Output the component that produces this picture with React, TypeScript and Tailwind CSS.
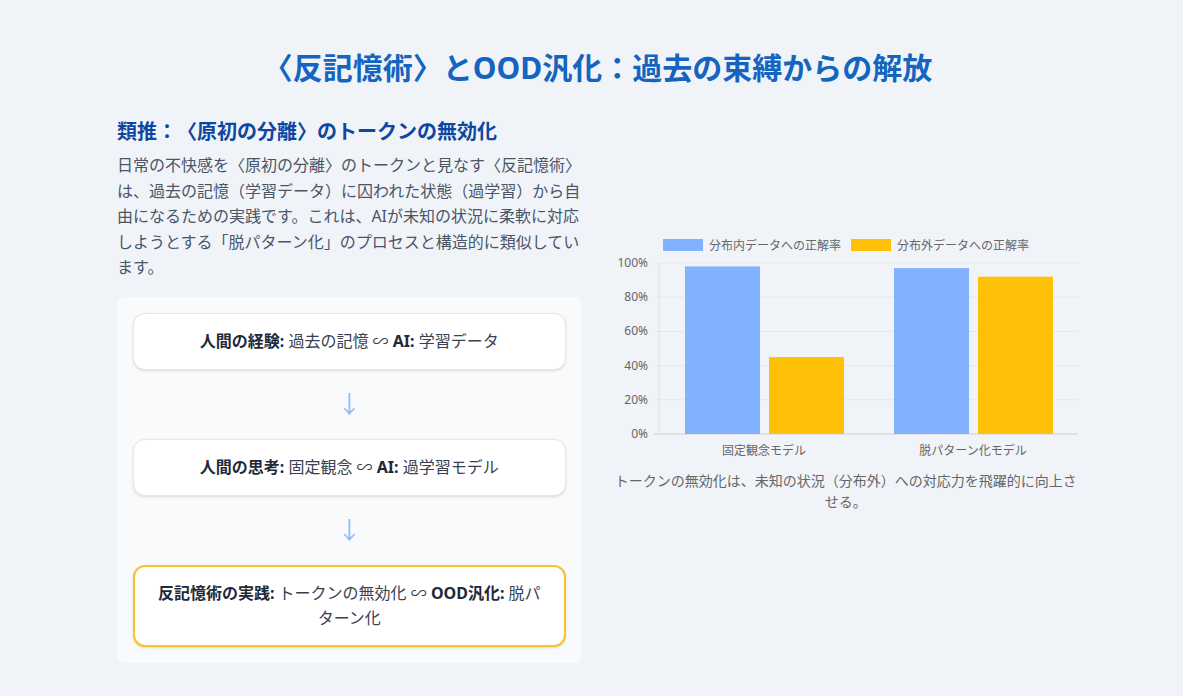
const font = { fontFamily: '"Noto Sans", "Noto Sans CJK JP", sans-serif' };

const bars = [
  { label: "固定観念モデル", cx: 150, inDist: 98, outDist: 45 },
  { label: "脱パターン化モデル", cx: 359, inDist: 97, outDist: 92 },
];

const ticks = [0, 20, 40, 60, 80, 100];

const Chart = () => {
  const top = 28;
  const bottom = 199;
  const h = bottom - top;
  const y = (v: number) => bottom - (h * v) / 100;
  return (
    <svg width="465" height="228" viewBox="0 0 465 228" className="block">
      <rect x="49" y="4" width="40" height="12" fill="#82b1ff" />
      <text x="95" y="14.5" fontSize="12" fill="#666">分布内データへの正解率</text>
      <rect x="237" y="4" width="40" height="12" fill="#ffc107" />
      <text x="283" y="14.5" fontSize="12" fill="#666">分布外データへの正解率</text>
      {ticks.map((t) => (
        <g key={t}>
          <line x1="40" x2="464" y1={y(t)} y2={y(t)} stroke={t === 0 ? "#cfcfcf" : "#e6e6e6"} strokeWidth="1" />
          <text x="34" y={y(t) + 4} fontSize="12" fill="#666" textAnchor="end">
            {t}%
          </text>
        </g>
      ))}
      <line x1="45" x2="45" y1={top} y2={bottom} stroke="#e0e0e0" />
      {bars.map((b) => (
        <g key={b.label}>
          <rect x={b.cx - 79} y={y(b.inDist)} width="75" height={bottom - y(b.inDist)} fill="#82b1ff" />
          <rect x={b.cx + 5} y={y(b.outDist)} width="75" height={bottom - y(b.outDist)} fill="#ffc107" />
          <text x={b.cx} y="220" fontSize="12" fill="#666" textAnchor="middle">
            {b.label}
          </text>
        </g>
      ))}
    </svg>
  );
};

const Card = ({ children, highlight }: { children: React.ReactNode; highlight?: boolean }) => (
  <div
    className={
      highlight
        ? "bg-white rounded-xl border-2 border-[#fbc02d] px-5 py-[14px] text-center text-base leading-[25px] text-[#374151] shadow-sm"
        : "bg-white rounded-xl border border-[#e2e8f0] px-5 py-4 text-center text-base leading-[23px] text-[#374151] shadow-sm"
    }
  >
    {children}
  </div>
);

const Arrow = () => (
  <div className="h-[69px] flex items-center justify-center text-2xl text-[#90bdf9]">↓</div>
);

export default function App() {
  return (
    <div className="min-h-screen bg-[#f0f4f8] [text-spacing-trim:space-all]" style={font}>
      <div className="pl-3 pt-[50px] pb-8 flex justify-center">
        <div className="w-[961px]">
          <h1 className="text-[30px] leading-9 font-bold text-[#1565c0] text-center mb-8">
            〈反記憶術〉とOOD汎化：過去の束縛からの解放
          </h1>
          <div className="grid grid-cols-2 gap-8">
            <div>
              <h2 className="text-xl leading-7 font-bold text-[#0d47a1] mb-[7px]">
                類推：〈原初の分離〉のトークンの無効化
              </h2>
              <p className="text-base leading-[25.6px] text-[#4a5568]">
                日常の不快感を〈原初の分離〉のトークンと見なす〈反記憶術〉は、過去の記憶（学習データ）に囚われた状態（過学習）から自由になるための実践です。これは、AIが未知の状況に柔軟に対応しようとする「脱パターン化」のプロセスと構造的に類似しています。
              </p>
              <div className="mt-4 bg-[#f8fafc] rounded-lg p-4">
                <Card>
                  <b className="text-[#1f2937]">人間の経験:</b> 過去の記憶 ∽ <b className="text-[#1f2937]">AI:</b> 学習データ
                </Card>
                <Arrow />
                <Card>
                  <b className="text-[#1f2937]">人間の思考:</b> 固定観念 ∽ <b className="text-[#1f2937]">AI:</b> 過学習モデル
                </Card>
                <Arrow />
                <Card highlight>
                  <b className="text-[#1f2937]">反記憶術の実践:</b> トークンの無効化 ∽ <b className="text-[#1f2937]">OOD汎化:</b> 脱パターン化
                </Card>
              </div>
            </div>
            <div className="pt-[117px]">
              <Chart />
              <p className="mt-[7px] text-sm leading-[21px] text-[#666] text-center">
                トークンの無効化は、未知の状況（分布外）への対応力を飛躍的に向上させる。
              </p>
            </div>
          </div>
        </div>
      </div>
    </div>
  );
}
